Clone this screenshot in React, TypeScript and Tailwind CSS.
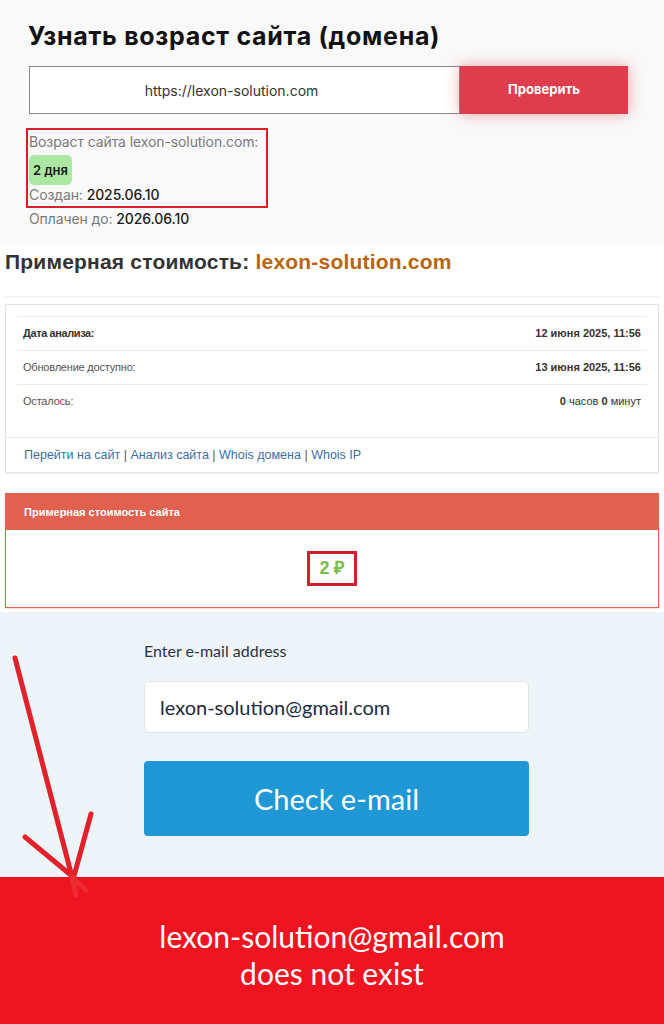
import React from 'react';

const rows = [
  { label: 'Дата анализа:', value: <b>12 июня 2025, 11:56</b>, bold: true },
  { label: 'Обновление доступно:', value: <b>13 июня 2025, 11:56</b>, bold: false },
  {
    label: 'Осталось:',
    value: (
      <>
        <b>0</b> часов <b>0</b> минут
      </>
    ),
    bold: false,
  },
];

const links = ['Перейти на сайт', 'Анализ сайта', 'Whois домена', 'Whois IP'];

const App = () => {
  return (
    <div className="relative w-[664px] overflow-hidden">
      {/* Domain age block */}
      <div className="bg-[#f9f9f9] h-[245px] px-[29px] pt-[17px] font-['Inter',sans-serif]">
        <h1 className="text-[25px] leading-[38px] font-bold text-[#111] -ml-px tracking-[0.7px]">
          Узнать возраст сайта (домена)
        </h1>
        <div className="flex mt-[11px] h-[48px] w-[599px]">
          <div className="flex-1 bg-white border border-[#8a8a8a] flex items-center justify-center pr-[26px] text-[14px] text-[#333]">
            https://lexon-solution.com
          </div>
          <button className="w-[168px] bg-[#df3c4e] text-white text-[13px] font-bold shadow-[0_0_14px_rgba(223,60,78,0.45)]">
            Проверить
          </button>
        </div>
        <div className="mt-[14px] -ml-[3px] w-[242px] border-2 border-[#d81f2b] pl-[1px] pt-[2px] pb-[1px] text-[14px] text-[#7a7a7a] leading-[20px] tracking-[-0.1px]">
          <div>Возраст сайта lexon-solution.com:</div>
          <div className="mt-[3px] inline-flex h-[30px] px-[4px] items-center rounded-[5px] bg-[#ace8a4] text-[#1a1a1a] text-[13px] font-semibold">
            2 дня
          </div>
          <div>
            Создан: <span className="text-[#1a1a1a] font-medium">2025.06.10</span>
          </div>
        </div>
        <div className="mt-[1px] text-[14px] text-[#7a7a7a] leading-[20px] tracking-[-0.1px]">
          Оплачен до: <span className="text-[#1a1a1a] font-medium">2026.06.10</span>
        </div>
      </div>

      {/* Estimated cost block */}
      <div className="bg-white h-[367px] px-[5px] pt-[3px] font-['Liberation_Sans',Arial,sans-serif]">
        <h2 className="text-[21px] leading-[28px] font-bold text-[#333] tracking-[0.2px]">
          Примерная стоимость: <span className="text-[#b9650f]">lexon-solution.com</span>
        </h2>
        <div className="mt-[20px] border-t border-[#f0f0f0]" />
        <div className="mt-[7px] border border-[#e2e2e2] shadow-[0_1px_2px_rgba(0,0,0,0.06)]">
          <div className="px-[11px] pt-[11px] pb-[19px]">
            {rows.map((row, i) => (
              <div
                key={i}
                className="flex justify-between items-center h-[34px] border-t border-[#ececec] px-[6px] text-[11px] text-[#333]"
              >
                <span className={row.bold ? 'font-bold tracking-[-0.4px]' : 'text-[#555] tracking-[-0.2px]'}>
                  {row.label}
                </span>
                <span className="text-[#333]">{row.value}</span>
              </div>
            ))}
          </div>
          <div className="border-t border-[#ececec] h-[35px] flex items-center px-[18px] text-[12.5px] text-[#3d6ea3] whitespace-pre">
            {links.map((l, i) => (
              <span key={l}>
                {i > 0 ? <span className="text-[#555]">{' | '}</span> : null}
                {l}
              </span>
            ))}
          </div>
        </div>

        <div className="mt-[20px] border border-[#e2604f] shadow-[0_1px_2px_rgba(226,96,79,0.25)]">
          <div className="h-[36px] bg-[#e2604f] flex items-center px-[18px] text-[11px] font-bold text-white">
            Примерная стоимость сайта
          </div>
          <div className="h-[77px] bg-white flex items-center justify-center">
            <div className="w-[50px] h-[35px] border-[3px] border-[#d21f2b] flex items-center justify-center text-[18px] font-bold text-[#7cba4a]">
              2 ₽
            </div>
          </div>
        </div>
      </div>

      {/* E-mail check block */}
      <div className="bg-[#eef5f8] h-[265px] pt-[27px] font-['Lato',sans-serif]">
        <div className="ml-[144px] w-[385px]">
          <div className="text-[16px] leading-[24px] text-[#2b3340]">Enter e-mail address</div>
          <div className="mt-[18px] h-[52px] bg-white border border-[#dfe3e6] rounded-[5px] flex items-center px-[15px] text-[20px] text-[#1c2a3d]">
            lexon-solution@gmail.com
          </div>
          <button className="mt-[28px] w-full h-[75px] bg-[#1f98d5] rounded-[4px] text-white text-[29px]">
            Check e-mail
          </button>
        </div>
      </div>

      {/* Result */}
      <div className="bg-[#ee1520] h-[147px] pt-[41px] text-center text-white text-[30px] leading-[37px] font-['Lato',sans-serif]">
        <div>lexon-solution@gmail.com</div>
        <div>does not exist</div>
      </div>

      {/* hand drawn arrow */}
      <svg
        className="absolute left-0 top-0 pointer-events-none"
        width="664"
        height="1024"
        viewBox="0 0 664 1024"
      >
        <g stroke="#e3212b" strokeWidth="5" strokeLinecap="round" fill="none">
          <path d="M15 658 L72 877" />
          <path d="M25 837 L72 876" />
          <path d="M91 814 L74 876" />
        </g>
        <g stroke="#f03a3f" strokeWidth="5" strokeLinecap="round" fill="none" opacity="0.6">
          <path d="M72 877 L76 895" />
          <path d="M72 877 L86 890" />
        </g>
      </svg>
    </div>
  );
};

export default App;
